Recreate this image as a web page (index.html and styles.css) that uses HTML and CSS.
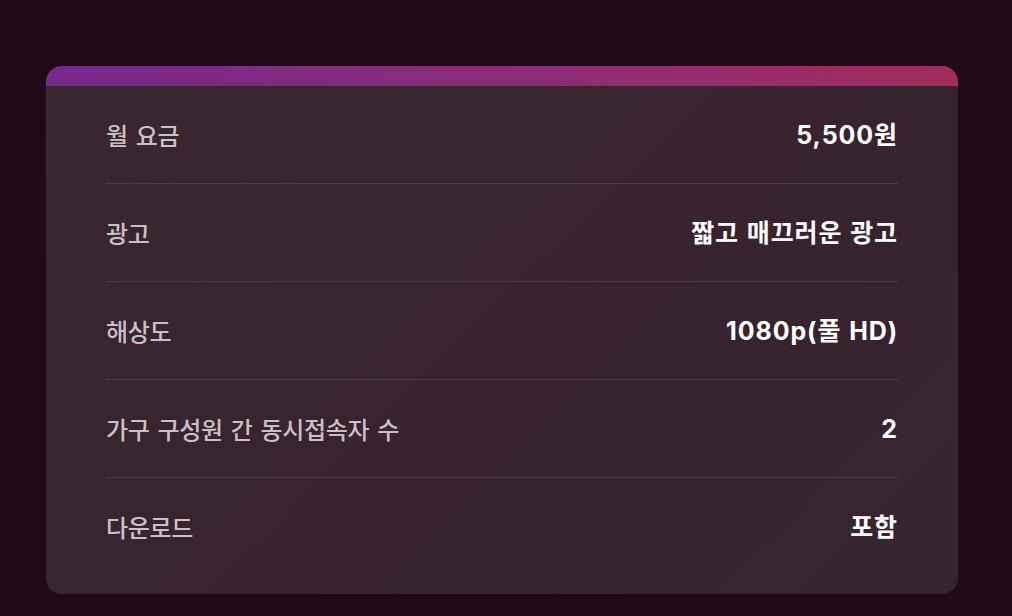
FILE: index.html
```html
<!DOCTYPE html>
<html lang="ko">
<head>
<meta charset="utf-8">
<link rel="stylesheet" href="styles.css">
</head>
<body>
<div class="page">
  <div class="card">
    <div class="card-bar"></div>
    <div class="card-body">
      <div class="row"><span class="label">월 요금</span><span class="value">5,500원</span></div>
      <div class="row"><span class="label">광고</span><span class="value">짧고 매끄러운 광고</span></div>
      <div class="row"><span class="label">해상도</span><span class="value">1080p(풀 HD)</span></div>
      <div class="row"><span class="label">가구 구성원 간 동시접속자 수</span><span class="value">2</span></div>
      <div class="row"><span class="label">다운로드</span><span class="value">포함</span></div>
    </div>
  </div>
</div>
</body>
</html>
```

FILE: styles.css
```css
html, body {
  margin: 0;
  padding: 0;
}
body {
  background: #200a17;
  font-family: "Noto Sans CJK KR", "Noto Sans", sans-serif;
  width: 1012px;
  height: 616px;
  overflow: hidden;
}
.page {
  padding: 66px 54px 0 46px;
}
.card {
  width: 912px;
  height: 528px;
  border-radius: 16px;
  overflow: hidden;
  background: linear-gradient(135deg, #3a2731 0%, #38232f 55%, #36252e 100%);
  display: flex;
  flex-direction: column;
}
.card-bar {
  height: 20px;
  flex: none;
  background: linear-gradient(90deg, #77298b 0%, #8a2c78 50%, #a32d5c 100%);
}
.card-body {
  padding: 0 60px;
  display: flex;
  flex-direction: column;
}
.row {
  height: 97px;
  display: flex;
  align-items: center;
  justify-content: space-between;
  border-bottom: 1px solid #4f3c47;
}
.row:last-child {
  border-bottom: none;
}
.label {
  color: #c9c1c6;
  font-size: 24px;
  line-height: 30px;
  font-weight: 500;
  letter-spacing: -0.3px;
  word-spacing: 1.5px;
}
.value {
  color: #ffffff;
  font-family: "Inter", "Noto Sans CJK KR", sans-serif;
  font-size: 25px;
  line-height: 30px;
  font-weight: 700;
  letter-spacing: 0.9px;
  word-spacing: 1px;
}
```
